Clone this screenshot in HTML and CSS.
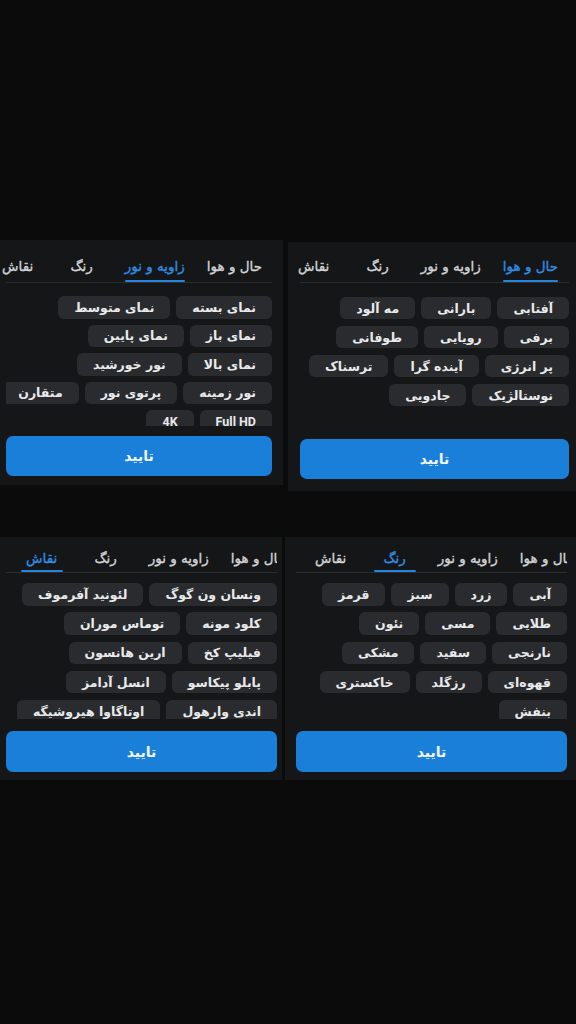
FILE: index.html
```html
<!DOCTYPE html>
<html lang="fa">
<head>
<meta charset="utf-8">
<title>انتخاب سبک تصویر</title>
<link rel="stylesheet" href="styles.css">
</head>
<body>
<main class="board">
  <div class="board-row board-row--top">
    <section class="sheet sheet--light" dir="rtl">
      <nav class="tabs">
        <div class="tabs-track">
          <span class="tab">حال و هوا</span>
          <span class="tab tab--active">زاویه و نور</span>
          <span class="tab">رنگ</span>
          <span class="tab">نقاش</span>
        </div>
      </nav>
      <div class="chips">
        <div class="chip-row"><span class="chip">نمای بسته</span><span class="chip">نمای متوسط</span></div>
        <div class="chip-row"><span class="chip">نمای باز</span><span class="chip">نمای پایین</span></div>
        <div class="chip-row"><span class="chip">نمای بالا</span><span class="chip">نور خورشید</span></div>
        <div class="chip-row"><span class="chip">نور زمینه</span><span class="chip">پرتوی نور</span><span class="chip">متقارن</span></div>
        <div class="chip-row"><span class="chip chip--latin">Full HD</span><span class="chip chip--latin">4K</span></div>
      </div>
      <button class="confirm" type="button">تایید</button>
    </section>

    <section class="sheet sheet--mood" dir="rtl">
      <nav class="tabs">
        <div class="tabs-track">
          <span class="tab tab--active">حال و هوا</span>
          <span class="tab">زاویه و نور</span>
          <span class="tab">رنگ</span>
          <span class="tab">نقاش</span>
        </div>
      </nav>
      <div class="chips">
        <div class="chip-row"><span class="chip">آفتابی</span><span class="chip">بارانی</span><span class="chip">مه آلود</span></div>
        <div class="chip-row"><span class="chip">برفی</span><span class="chip">رویایی</span><span class="chip">طوفانی</span></div>
        <div class="chip-row"><span class="chip">پر انرژی</span><span class="chip">آینده گرا</span><span class="chip">ترسناک</span></div>
        <div class="chip-row"><span class="chip">نوستالژیک</span><span class="chip">جادویی</span></div>
      </div>
      <button class="confirm" type="button">تایید</button>
    </section>
  </div>

  <div class="board-row board-row--bottom">
    <section class="sheet sheet--artist" dir="rtl">
      <nav class="tabs">
        <div class="tabs-track">
          <span class="tab">حال و هوا</span>
          <span class="tab">زاویه و نور</span>
          <span class="tab">رنگ</span>
          <span class="tab tab--active">نقاش</span>
        </div>
      </nav>
      <div class="chips">
        <div class="chip-row"><span class="chip">ونسان ون گوگ</span><span class="chip">لئونید آفرموف</span></div>
        <div class="chip-row"><span class="chip">کلود مونه</span><span class="chip">توماس موران</span></div>
        <div class="chip-row"><span class="chip">فیلیپ کخ</span><span class="chip">ارین هانسون</span></div>
        <div class="chip-row"><span class="chip">پابلو پیکاسو</span><span class="chip">انسل آدامز</span></div>
        <div class="chip-row"><span class="chip">اندی وارهول</span><span class="chip">اوتاگاوا هیروشیگه</span></div>
      </div>
      <button class="confirm" type="button">تایید</button>
    </section>

    <section class="sheet sheet--color" dir="rtl">
      <nav class="tabs">
        <div class="tabs-track">
          <span class="tab">حال و هوا</span>
          <span class="tab">زاویه و نور</span>
          <span class="tab tab--active">رنگ</span>
          <span class="tab">نقاش</span>
        </div>
      </nav>
      <div class="chips">
        <div class="chip-row"><span class="chip">آبی</span><span class="chip">زرد</span><span class="chip">سبز</span><span class="chip">قرمز</span></div>
        <div class="chip-row"><span class="chip">طلایی</span><span class="chip">مسی</span><span class="chip">نئون</span></div>
        <div class="chip-row"><span class="chip">نارنجی</span><span class="chip">سفید</span><span class="chip">مشکی</span></div>
        <div class="chip-row"><span class="chip">قهوه‌ای</span><span class="chip">رزگلد</span><span class="chip">خاکستری</span></div>
        <div class="chip-row"><span class="chip">بنفش</span></div>
      </div>
      <button class="confirm" type="button">تایید</button>
    </section>
  </div>
</main>
</body>
</html>
```

FILE: styles.css
```css
* {
  box-sizing: border-box;
}

html,
body {
  margin: 0;
  padding: 0;
}

body {
  width: 576px;
  height: 1024px;
  background: #0b0b0c;
  font-family: "DejaVu Sans", "Noto Sans", sans-serif;
  color: #e6e7e8;
  overflow: hidden;
}

/* two rows of sheets side by side */
.board-row {
  display: flex;
  justify-content: space-between;
  align-items: flex-start;
}

.board-row--top {
  margin-top: 240px;
}

.board-row--bottom {
  margin-top: 46px;
}

/* a bottom sheet with tabs, option chips and a confirm button */
.sheet {
  background: #151618;
  display: flex;
  flex-direction: column;
}

.sheet--light {
  width: 283px;
  padding: 0 11px 9px 6px;
  --tabs-h: 42px;
  --tab-pt: 17px;
  --track-start: 10px;
  --chips-top: 13px;
  --chips-h: 130px;
  --chip-h: 22.5px;
  --row-gap: 6px;
  --btn-top: 10px;
  --btn-h: 40px;
}

.sheet--mood {
  width: 288px;
  margin-top: 2px;
  padding: 0 7px 12px 12px;
  --tabs-h: 40px;
  --tab-pt: 15px;
  --track-start: 11px;
  --chips-top: 14px;
  --chips-h: 132px;
  --chip-h: 22px;
  --row-gap: 7px;
  --btn-top: 10px;
  --btn-h: 40px;
}

/* the two lower sheets have their tab strip scrolled a little */
.sheet--artist {
  width: 282px;
  padding: 0 5px 8px 6px;
  --tabs-h: 35px;
  --tab-pt: 12px;
  --track-start: -9px;
  --chips-top: 10px;
  --chips-h: 136px;
  --chip-h: 22.5px;
  --row-gap: 6.75px;
  --btn-top: 12px;
  --btn-h: 41px;
}

.sheet--color {
  width: 291px;
  padding: 0 9px 8px 11px;
  --tabs-h: 35px;
  --tab-pt: 12px;
  --track-start: -8px;
  --chips-top: 10px;
  --chips-h: 136px;
  --chip-h: 22.5px;
  --row-gap: 6.75px;
  --btn-top: 12px;
  --btn-h: 41px;
}

/* tab strip: clipped at the inline start edge, a little slack at the end */
.tabs {
  height: calc(var(--tabs-h) + 1px);
  border-bottom: 1px solid #2b2c2f;
  clip-path: inset(-2px 0 -2px -8px);
}

.tabs-track {
  display: flex;
  gap: 22px;
  height: 100%;
  margin-right: var(--track-start);
}

.tab {
  position: relative;
  flex-shrink: 0;
  min-width: 42px;
  padding-top: var(--tab-pt);
  text-align: center;
  white-space: nowrap;
  font-size: 13.5px;
  line-height: 18px;
  -webkit-text-stroke: 0.35px currentColor;
  color: #d2d3d5;
}

.tab--active {
  color: #2f8de2;
}

.tab--active::after {
  content: "";
  position: absolute;
  left: 0;
  right: 0;
  bottom: 0;
  height: 2px;
  border-radius: 1px;
  background: #2584dc;
}

/* option chips */
.chips {
  margin-top: var(--chips-top);
  height: var(--chips-h);
  overflow: hidden;
  display: flex;
  flex-direction: column;
  gap: var(--row-gap);
}

.chip-row {
  display: flex;
  gap: 6px;
}

.chip {
  flex-shrink: 0;
  height: var(--chip-h);
  padding: 0 16px;
  display: flex;
  align-items: center;
  background: #2a2b2e;
  border-radius: 6px;
  white-space: nowrap;
  font-size: 12.5px;
  font-weight: bold;
  color: #e9eaeb;
}

.chip--latin {
  font-family: Roboto, "DejaVu Sans", sans-serif;
  font-size: 12.5px;
}

/* confirm button */
.confirm {
  display: block;
  width: 100%;
  height: var(--btn-h);
  margin-top: var(--btn-top);
  border: 0;
  border-radius: 7px;
  background: #1a7fd9;
  color: #f1f6fb;
  font-family: "DejaVu Sans", "Noto Sans", sans-serif;
  font-size: 14px;
  font-weight: bold;
  cursor: pointer;
}
```
